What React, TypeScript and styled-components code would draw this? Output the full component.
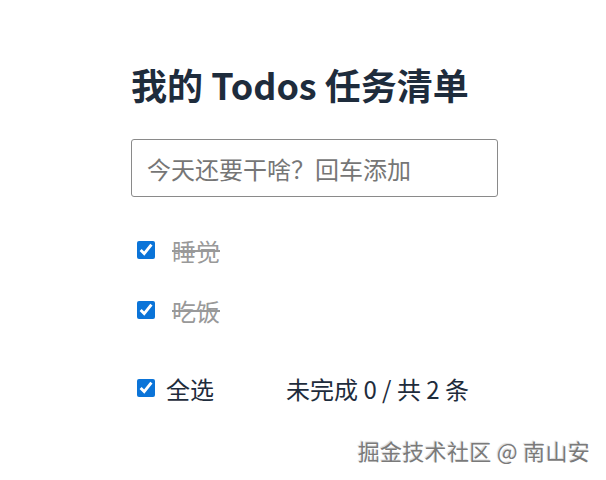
import React, { useState } from "react";
import styled, { createGlobalStyle } from "styled-components";

const Global = createGlobalStyle`
  html, body { margin: 0; padding: 0; background: #ffffff; }
  body { font-family: "Noto Sans CJK SC", "Noto Sans", sans-serif; }
  * { box-sizing: border-box; }
`;

const Page = styled.div`
  position: relative;
  width: 606px;
  height: 480px;
  overflow: hidden;
  background: #fff;
`;

const Panel = styled.div`
  display: flex;
  flex-direction: column;
  width: 367px;
  margin-left: 131px;
  padding-top: 58px;
`;

const Title = styled.h1`
  margin: 0;
  font-size: 36px;
  font-weight: 700;
  line-height: 52px;
  color: #1e2c3c;
`;

const Input = styled.input`
  margin-top: 29px;
  width: 367px;
  height: 58px;
  padding: 0 15px;
  border: 1px solid #8a8a8a;
  border-radius: 3px;
  font-family: inherit;
  font-size: 24px;
  color: #333;
  outline: none;
  &::placeholder { color: #767676; }
`;

const List = styled.ul`
  list-style: none;
  margin: 35px 0 0 0;
  padding: 0;
  display: flex;
  flex-direction: column;
  gap: 24px;
`;

const Row = styled.li`
  display: flex;
  align-items: center;
  height: 36px;
`;

const Check = styled.input`
  width: 18px;
  height: 18px;
  margin: 0 0 0 6px;
  accent-color: #0b74d8;
`;

const ItemText = styled.span<{ $done: boolean }>`
  margin-left: 17px;
  font-size: 24px;
  color: ${(p) => (p.$done ? "#999" : "#1e2c3c")};
  text-decoration: ${(p) => (p.$done ? "line-through" : "none")};
`;

const Footer = styled.div`
  display: flex;
  align-items: center;
  height: 36px;
  margin-top: 42px;
`;

const FooterLabel = styled.span`
  margin-left: 11px;
  font-size: 24px;
  color: #1e2c3c;
`;

const Count = styled.span`
  margin-left: 72px;
  font-size: 24px;
  color: #1e2c3c;
`;

const Watermark = styled.div`
  position: absolute;
  right: 16px;
  bottom: 14px;
  font-size: 22px;
  letter-spacing: 0.3px;
  color: #7a7a7a;
  text-shadow: 1px 1px 1px #ffffff, -1px -1px 1px rgba(0,0,0,0.15);
`;

export default function App() {
  const [todos, setTodos] = useState([
    { id: 1, text: "睡觉", done: true },
    { id: 2, text: "吃饭", done: true },
  ]);
  const left = todos.filter((t) => !t.done).length;
  const allDone = todos.every((t) => t.done);
  return (
    <Page>
      <Global />
      <Panel>
        <Title>我的 Todos 任务清单</Title>
        <Input placeholder="今天还要干啥？回车添加" />
        <List>
          {todos.map((t) => (
            <Row key={t.id}>
              <Check
                type="checkbox"
                checked={t.done}
                onChange={() =>
                  setTodos(todos.map((x) => (x.id === t.id ? { ...x, done: !x.done } : x)))
                }
              />
              <ItemText $done={t.done}>{t.text}</ItemText>
            </Row>
          ))}
        </List>
        <Footer>
          <Check
            type="checkbox"
            checked={allDone}
            onChange={() => setTodos(todos.map((x) => ({ ...x, done: !allDone })))}
          />
          <FooterLabel>全选</FooterLabel>
          <Count>未完成 {left} / 共 {todos.length} 条</Count>
        </Footer>
      </Panel>
      <Watermark>掘金技术社区 @ 南山安</Watermark>
    </Page>
  );
}
